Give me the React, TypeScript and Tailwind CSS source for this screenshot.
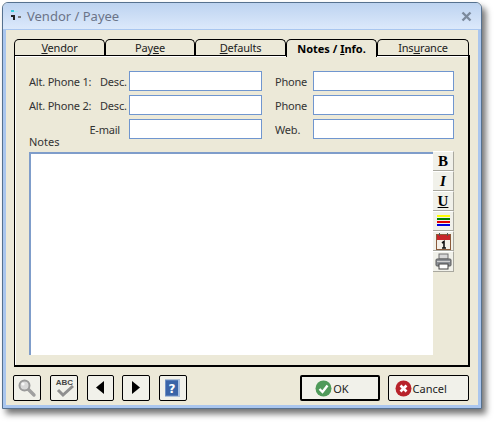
import React from "react";

const FONT = "font-['Noto_Sans',sans-serif]";

function Tab({ w, active, children }: { w: string; active?: boolean; children: React.ReactNode }) {
  return (
    <div
      className={`${w} ${active ? "h-[18px] mb-[-2px] z-10 font-bold text-black" : "h-[16px] text-[#222] tracking-[-0.2px]"} flex items-center justify-center border-t border-l border-r border-black rounded-t-[5px] bg-[#ece9d8] text-[11px] leading-none whitespace-nowrap`}
    >
      {children}
    </div>
  );
}

function Field({ w }: { w: string }) {
  return <div className={`${w} h-[20px] shrink-0 bg-white border border-[#7096cf]`} />;
}

function ToolBtn({ children, h = "h-[20px]" }: { children: React.ReactNode; h?: string }) {
  return (
    <div className={`w-[21px] ${h} flex items-center justify-center bg-[#f1f1ea] border-r border-b border-[#a9a89f] border-t-white border-t`}>
      {children}
    </div>
  );
}

function SmallBtn({ children, w = "w-[28px]" }: { children: React.ReactNode; w?: string }) {
  return (
    <div className={`${w} h-[26px] flex items-center justify-center bg-[#f1f1ea] border border-black rounded-[2px]`}>
      {children}
    </div>
  );
}

export default function App() {
  return (
    <div className={`w-[496px] h-[424px] bg-white pl-[2px] pt-[2px] ${FONT}`}>
      <div className="w-[480px] h-[407px] flex flex-col rounded-t-[6px] bg-[#ece9d8] border border-[#56718f] shadow-[4px_5px_6px_rgba(0,0,0,0.55)] overflow-hidden">
        <div className="h-[27px] shrink-0 flex items-center bg-gradient-to-b from-[#bdd3f0] to-[#dce9fb] border-b border-[#a9c6ef] pl-[6px] pr-[9px]">
          <svg width="14" height="14" viewBox="0 0 14 14" className="mr-[4px]">
            <rect x="2" y="1" width="3" height="2" fill="#38c8d8" />
            <rect x="5" y="2" width="4" height="1" fill="#a8e8f0" />
            <rect x="2" y="6" width="4" height="2" fill="#222" />
            <rect x="4" y="8" width="2" height="3" fill="#222" />
            <rect x="9" y="7" width="3" height="2" fill="#777" />
          </svg>
          <span className="text-[13px] leading-none text-[#6b7488]">Vendor / Payee</span>
          <svg width="11" height="11" viewBox="0 0 11 11" className="ml-auto">
            <path d="M1.5 1.5 L9.5 9.5 M9.5 1.5 L1.5 9.5" stroke="#7c8a9c" strokeWidth="2.4" />
          </svg>
        </div>

        <div className="flex-1 flex flex-col border-l-[3px] border-r-[3px] border-b-[3px] border-[#aac6ee] pt-[8px] pl-[8px] pr-[9px]">
          <div className="flex items-end h-[17px]">
            <Tab w="w-[91px]"><span><u>V</u>endor</span></Tab>
            <Tab w="w-[90px]"><span>Pay<u>e</u>e</span></Tab>
            <Tab w="w-[91px]"><span><u>D</u>efaults</span></Tab>
            <Tab w="w-[91px]" active><span>Notes / <u>I</u>nfo.</span></Tab>
            <Tab w="w-[92px]"><span>Ins<u>u</u>rance</span></Tab>
          </div>

          <div className="h-[312px] w-[456px] border border-black border-r-2 border-b-2 bg-[#ece9d8] shadow-[inset_1px_1px_0_#fff] pl-[14px] pt-[15px] text-[11px] leading-none text-[#333] whitespace-nowrap">
            <div className="flex flex-col gap-[4px] tracking-[-0.2px]">
              <div className="flex items-center">
                <span className="w-[71px]">Alt. Phone 1:</span>
                <span className="w-[29px]">Desc.</span>
                <Field w="w-[133px]" />
                <span className="w-[51px] pl-[13px]">Phone</span>
                <Field w="w-[141px]" />
              </div>
              <div className="flex items-center">
                <span className="w-[71px]">Alt. Phone 2:</span>
                <span className="w-[29px]">Desc.</span>
                <Field w="w-[133px]" />
                <span className="w-[51px] pl-[13px]">Phone</span>
                <Field w="w-[141px]" />
              </div>
              <div className="flex items-center">
                <span className="w-[91px] text-right">E-mail</span>
                <span className="w-[9px]" />
                <Field w="w-[133px]" />
                <span className="w-[51px] pl-[13px]">Web.</span>
                <Field w="w-[141px]" />
              </div>
            </div>
            <div className="h-[13px] leading-[6px]">Notes</div>
            <div className="flex">
              <div className="w-[404px] h-[203px] bg-white border-l-2 border-t-2 border-[#7f9dca]" />
              <div className="flex flex-col mt-[-1px]">
                <ToolBtn>
                  <span className="font-['Liberation_Serif',serif] font-bold text-[15px] text-black">B</span>
                </ToolBtn>
                <ToolBtn>
                  <span className="font-['Liberation_Serif',serif] font-bold italic text-[15px] text-black">I</span>
                </ToolBtn>
                <ToolBtn>
                  <span className="font-['Liberation_Serif',serif] font-bold underline text-[15px] text-black">U</span>
                </ToolBtn>
                <ToolBtn>
                  <svg width="13" height="12" viewBox="0 0 13 12">
                    <rect y="0" width="13" height="2" fill="#ffff00" />
                    <rect y="3" width="13" height="2" fill="#008000" />
                    <rect y="6" width="13" height="2" fill="#e00000" />
                    <rect y="9" width="13" height="2" fill="#0000e0" />
                  </svg>
                </ToolBtn>
                <ToolBtn>
                  <svg width="15" height="17" viewBox="0 0 15 17">
                    <rect x="0.5" y="1.5" width="14" height="15" fill="#f4f0e8" stroke="#8a5a3a" />
                    <rect x="1" y="2" width="13" height="5" fill="#c8262a" />
                    <rect x="3" y="0" width="1" height="3" fill="#555" />
                    <rect x="11" y="0" width="1" height="3" fill="#555" />
                    <path d="M6 10 L8 8.5 V15 M6 15 H10" stroke="#111" strokeWidth="1.6" fill="none" />
                  </svg>
                </ToolBtn>
                <ToolBtn h="h-[21px]">
                  <svg width="17" height="17" viewBox="0 0 17 17">
                    <rect x="4" y="1" width="9" height="5" fill="#d8d8d8" stroke="#707070" />
                    <rect x="1" y="6" width="15" height="7" rx="1" fill="#8c9096" stroke="#5c5c5c" />
                    <rect x="4" y="11" width="9" height="5" fill="#fff" stroke="#444" />
                    <rect x="2" y="8" width="13" height="1" fill="#d0d0d0" />
                  </svg>
                </ToolBtn>
              </div>
            </div>
          </div>

          <div className="flex items-center h-[26px] mt-[8px] ml-[-1px] text-[11px] leading-none text-[#222]">
            <SmallBtn>
              <svg width="20" height="20" viewBox="0 0 20 20">
                <path d="M11 11 L17 17" stroke="#a0a0a0" strokeWidth="3.4" strokeLinecap="round" />
                <circle cx="7.5" cy="7.5" r="5" fill="#d8d8d8" stroke="#9a9a9a" strokeWidth="2" />
                <circle cx="6" cy="6" r="1.6" fill="#f6f6f6" />
              </svg>
            </SmallBtn>
            <div className="w-[9px]" />
            <SmallBtn>
              <div className="relative w-[22px] h-[20px]">
                <span className="absolute left-[3px] top-[1px] text-[8px] font-bold font-['Liberation_Sans',sans-serif] text-[#444]">ABC</span>
                <svg width="22" height="20" viewBox="0 0 22 20" className="absolute inset-0">
                  <path d="M5 12 L10 17 L20 8" stroke="#8f8f8f" strokeWidth="3" fill="none" />
                </svg>
              </div>
            </SmallBtn>
            <div className="w-[9px]" />
            <SmallBtn w="w-[27px]">
              <svg width="10" height="14" viewBox="0 0 10 14"><path d="M9 0 V13 L1 6.5 Z" fill="#000" /></svg>
            </SmallBtn>
            <div className="w-[9px]" />
            <SmallBtn>
              <svg width="10" height="14" viewBox="0 0 10 14"><path d="M1 0 V13 L9 6.5 Z" fill="#000" /></svg>
            </SmallBtn>
            <div className="w-[9px]" />
            <SmallBtn>
              <svg width="16" height="18" viewBox="0 0 16 18">
                <rect x="0.5" y="1" width="14" height="16" fill="#3a64a8" stroke="#6f90c4" />
                <rect x="13" y="1" width="2" height="16" fill="#a8c0e0" />
                <text x="7" y="14" fontSize="12" fontWeight="700" fill="#fff" textAnchor="middle" fontFamily="DejaVu Sans">?</text>
              </svg>
            </SmallBtn>
            <div className="w-[113px]" />
            <div className="w-[81px] h-[26px] flex items-center justify-center gap-[1px] pr-[16px] bg-[#f1f1ea] border-2 border-black rounded-[2px]">
              <svg width="17" height="17" viewBox="0 0 17 17">
                <circle cx="8.5" cy="8.5" r="8" fill="#4f9a5a" />
                <path d="M4.5 9 L7.5 12 L12.5 5.5" stroke="#fff" strokeWidth="2.4" fill="none" />
              </svg>
              <span>OK</span>
            </div>
            <div className="w-[8px]" />
            <div className="w-[81px] h-[26px] flex items-center justify-center gap-[1px] pr-[16px] bg-[#f1f1ea] border border-black rounded-[2px]">
              <svg width="17" height="17" viewBox="0 0 17 17">
                <circle cx="8.5" cy="8.5" r="8" fill="#b8232b" />
                <path d="M5.5 5.5 L11.5 11.5 M11.5 5.5 L5.5 11.5" stroke="#fff" strokeWidth="2.6" />
              </svg>
              <span>Cancel</span>
            </div>
          </div>
        </div>
      </div>
    </div>
  );
}
